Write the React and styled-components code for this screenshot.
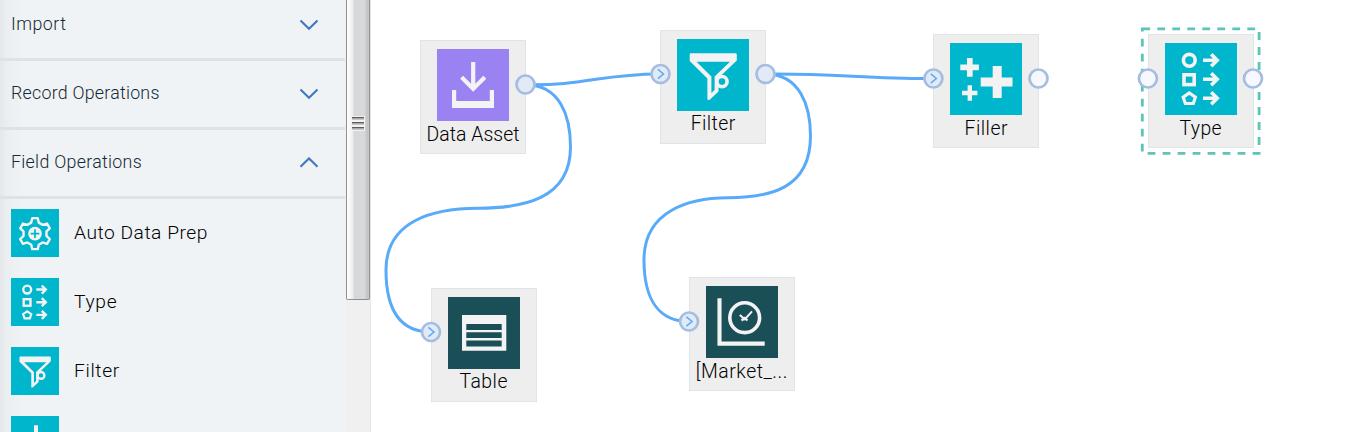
import React from "react";
import styled, { createGlobalStyle } from "styled-components";

const GlobalStyle = createGlobalStyle`
  * { box-sizing: border-box; }
  body {
    margin: 0;
    overflow: hidden;
    background: #fff;
    font-family: Roboto, "Liberation Sans", sans-serif;
    font-weight: 300;
  }
`;

const TEAL = "#00b6cd";
const PURPLE = "#9b82f3";
const DARK = "#1b4f57";
const LIGHT = "#f3f3f3";

const Page = styled.div`
  display: flex;
  width: 1370px;
  height: 432px;
  overflow: hidden;
`;

const Sidebar = styled.aside`
  flex: none;
  width: 346px;
  height: 432px;
  padding-right: 1px;
  overflow: hidden;
  background: linear-gradient(to right, #e4e8eb 0, #ebeff1 8px, #eff3f6 22px);
`;

const SectionHeader = styled.div`
  display: flex;
  align-items: center;
  justify-content: space-between;
  height: 69px;
  padding: 0 26px 1px 11px;
  border-bottom: 3px solid #dee2e5;
  color: #152935;
  font-size: 17.8px;
  letter-spacing: ${(p) => p.$spacing}px;
  &:first-child { margin-top: -8px; }
`;

const SectionTitle = styled.span`
  padding-bottom: 2px;
`;

const PaletteList = styled.div`
  display: flex;
  flex-direction: column;
  gap: 21px;
  padding: 10px 0 0 11px;
`;

const PaletteRow = styled.div`
  display: flex;
  align-items: center;
  gap: 15px;
  height: 48px;
  color: #000;
  font-size: 19.2px;
  letter-spacing: ${(p) => p.$spacing}px;
  white-space: nowrap;
`;

const PaletteLabel = styled.span`
  line-height: 24px;
`;

const ScrollTrack = styled.div`
  flex: none;
  width: 25px;
  height: 432px;
  background: #f0f0f0;
  border-right: 1px solid #e6e6e6;
`;

const ScrollThumb = styled.div`
  display: flex;
  flex-direction: column;
  align-items: center;
  gap: 2px;
  width: 24px;
  height: 300px;
  padding: 117px 1px 0 0;
  border: 1px solid #8f8f91;
  border-top: 0;
  border-radius: 0 0 2px 2px;
  background: linear-gradient(to right, #fff 0, #f0f0f1 5px, #ebebec 6px, #d6d7d9 7px, #d8d9db 17px, #bfc0c2 21px, #d0d0d2 22px);
`;

const Grip = styled.div`
  width: 12px;
  height: 3px;
  background: linear-gradient(to bottom, #5c5c5c 0 1px, #a8a8a8 1px 2px, #c6c6c6 2px 3px);
  box-shadow: 0 0 0 1px #f2f2f2;
`;

const Canvas = styled.main`
  position: relative;
  flex: 1;
  height: 432px;
  background: #fff;
`;

const Overlay = styled.svg`
  position: absolute;
  top: 0;
  left: -371px;
  pointer-events: none;
`;

const NodeCard = styled.div`
  position: absolute;
  left: ${(p) => p.$x - 371}px;
  top: ${(p) => p.$y}px;
  display: flex;
  flex-direction: column;
  align-items: center;
  width: 106px;
  height: 114px;
  padding-top: 8px;
  border: 1px solid #dfe4e8;
  background: #eee;
`;

const NodeLabel = styled.div`
  margin-top: ${(p) => p.$drop}px;
  height: 24px;
  line-height: 24px;
  color: #000;
  font-size: 19.4px;
  letter-spacing: ${(p) => p.$spacing}px;
  margin-right: ${(p) => -p.$spacing}px;
  white-space: nowrap;
`;

const IconSvg = styled.svg`
  display: block;
  flex: none;
`;

function Tile({ size, color, children }) {
  return (
    <IconSvg width={size} height={size} viewBox="0 0 72 72" fill="none" stroke={LIGHT}>
      <rect width="72" height="72" fill={color} stroke="none" />
      {children}
    </IconSvg>
  );
}

const DataAssetIcon = ({ size }) => (
  <Tile size={size} color={PURPLE}>
    <path d="M36.2 13V39.5M24.6 28.3L36.2 39.8L47.8 28.3" strokeWidth="4.2" />
    <path d="M15 41h4.2v11h33.6V41H57v18H15z" fill={LIGHT} stroke="none" />
  </Tile>
);

const FilterIcon = ({ size }) => (
  <Tile size={size} color={TEAL}>
    <path
      fillRule="evenodd"
      fill={LIGHT}
      stroke="none"
      d="M14 14.3H58.6Q59.8 14.3 59.8 15.5V21.5L41.5 39V52.5L33 60.5Q30.4 62 30.4 59.5V39.5L12.7 22V15.5Q12.7 14.3 14 14.3ZM19.6 22.8L34.4 37.6V54L37.6 51V37.6L53 22.8Z"
    />
    <circle cx="45" cy="42.6" r="5.1" fill={TEAL} strokeWidth="3.6" />
  </Tile>
);

const FillerIcon = ({ size }) => (
  <Tile size={size} color={TEAL}>
    <path d="M19.8 15V33.7M10.3 24.4H28.9" strokeWidth="5.7" />
    <path d="M19.8 42.3V57.7M12 50H27.4" strokeWidth="4.4" />
    <path d="M47.2 23V55M30.7 39H62.5" strokeWidth="9" />
  </Tile>
);

const TypeIcon = ({ size }) => (
  <Tile size={size} color={TEAL}>
    <g strokeWidth="3.6">
      <circle cx="24.3" cy="17.3" r="5.9" />
      <rect x="19" y="31.8" width="10.2" height="9.8" />
      <path d="M24.3 50L30.4 54.2L28.3 60.5H20.3L18.2 54.2Z" strokeWidth="3.2" />
      {[17.3, 36.3, 55.3].map((y) => (
        <path key={y} d={`M38 ${y}H52M46.2 ${y - 6}L52.2 ${y}L46.2 ${y + 6}`} />
      ))}
    </g>
  </Tile>
);

const TableIcon = ({ size }) => (
  <Tile size={size} color={DARK}>
    <path d="M14 18H58.3V53.7H14Z" fill={LIGHT} stroke="none" />
    <path d="M18.3 27H53.7V33H18.3ZM18.3 35.3H53.7V41H18.3ZM18.3 43.4H53.7V49.4H18.3Z" fill={DARK} stroke="none" />
  </Tile>
);

const AnalysisIcon = ({ size }) => (
  <Tile size={size} color={DARK}>
    <path d="M13.5 12.3V57.6H58.7" strokeWidth="4.1" />
    <circle cx="38.7" cy="31.7" r="14.9" strokeWidth="3.6" />
    <path d="M33.8 29L38.8 33.3L46 25.3" strokeWidth="2" />
    <path d="M35.5 34.5L38.8 32L41.5 34.5" strokeWidth="2.2" />
  </Tile>
);

const gearPoints = Array.from({ length: 6 }, (_, tooth) =>
  [[17.5, -19], [23.6, -10], [23.6, 10], [17.5, 19]].map(([radius, offset]) => {
    const angle = ((tooth * 60 - 90 + offset) * Math.PI) / 180;
    return `${(36 + radius * Math.cos(angle)).toFixed(2)},${(37 + radius * Math.sin(angle)).toFixed(2)}`;
  }).join(" ")
).join(" ");

const GearIcon = ({ size }) => (
  <Tile size={size} color={TEAL}>
    <polygon points={gearPoints} strokeWidth="3.6" strokeLinejoin="round" />
    <circle cx="36" cy="37" r="10.2" fill={LIGHT} stroke="none" />
    <path d="M36 30.5V43.5M29.5 37H42.5" stroke={TEAL} strokeWidth="2.6" />
  </Tile>
);

const DeriveIcon = ({ size }) => (
  <Tile size={size} color={TEAL}>
    <path d="M37.5 13.7V50M26 36H47" strokeWidth="6" />
  </Tile>
);

const SECTIONS = [
  { label: "Import", spacing: 0.5 },
  { label: "Record Operations", spacing: 0.25 },
  { label: "Field Operations", spacing: 0.3, open: true },
];

const PALETTE = [
  { label: "Auto Data Prep", Icon: GearIcon, spacing: 0.53 },
  { label: "Type", Icon: TypeIcon, spacing: 0.7 },
  { label: "Filter", Icon: FilterIcon, spacing: 0.65 },
  { label: "Derive", Icon: DeriveIcon, spacing: 0.6 },
];

const NODES = [
  { label: "Data Asset", x: 420, y: 40, drop: 2, Icon: DataAssetIcon, spacing: 0.05 },
  { label: "Filter", x: 660, y: 30, drop: 1, Icon: FilterIcon, spacing: 0.4 },
  { label: "Filler", x: 933, y: 34, drop: 2, Icon: FillerIcon, spacing: 0.5 },
  { label: "Type", x: 1147.6, y: 34, drop: 2, Icon: TypeIcon, spacing: 0.4 },
  { label: "Table", x: 430.5, y: 288, drop: 1, Icon: TableIcon, spacing: 0.45 },
  { label: "[Market_...", x: 688.6, y: 277, drop: 2, Icon: AnalysisIcon, spacing: 0.52 },
];

const LINKS = [
  "M525.5 84.7C585 86 600 74 660 74",
  "M525.5 84.7C560 84.7 570.5 116 570.5 147C570.5 200 522 208 478 208.3C434 208.5 386 220 386 270C386 312 402 332 431 332",
  "M765.5 74C830 73 870 79 933.5 78.5",
  "M765.5 74C800 74 810.5 106 810.5 136C810.5 189 770 197.5 728 197.8C690 198 644 210 644 260C644 301 660 321.5 689 321.5",
];

const PORTS = [
  { x: 525.5, y: 84.5, linked: true },
  { x: 660.5, y: 74, linked: true, input: true },
  { x: 765.5, y: 74, linked: true },
  { x: 933.4, y: 78.5, linked: true, input: true },
  { x: 1038.5, y: 78.5 },
  { x: 1147.9, y: 78.5 },
  { x: 1253, y: 78.5 },
  { x: 431, y: 332, linked: true, input: true },
  { x: 689, y: 321.5, linked: true, input: true },
];

function Chevron({ open }) {
  return (
    <IconSvg width="20" height="12" viewBox="0 0 20 12" fill="none" stroke="#4178be" strokeWidth="2.1">
      <path d={open ? "M1.5 9.8L10 1.4L18.5 9.8" : "M1.5 1.4L10 9.8L18.5 1.4"} />
    </IconSvg>
  );
}

export default function App() {
  return (
    <Page>
      <GlobalStyle />
      <Sidebar>
        {SECTIONS.map((s) => (
          <SectionHeader key={s.label} $spacing={s.spacing}>
            <SectionTitle>{s.label}</SectionTitle>
            <Chevron open={s.open} />
          </SectionHeader>
        ))}
        <PaletteList>
          {PALETTE.map(({ label, Icon, spacing }) => (
            <PaletteRow key={label} $spacing={spacing}>
              <Icon size={48} />
              <PaletteLabel>{label}</PaletteLabel>
            </PaletteRow>
          ))}
        </PaletteList>
      </Sidebar>
      <ScrollTrack>
        <ScrollThumb>
          <Grip />
          <Grip />
          <Grip />
        </ScrollThumb>
      </ScrollTrack>
      <Canvas>
        <Overlay width="1370" height="432">
          <rect x="1142.3" y="28.9" width="116.8" height="124.5" fill="none" stroke="#5fc4b8" strokeWidth="2.8" strokeDasharray="7.8 7.2" />
        </Overlay>
        {NODES.map(({ label, x, y, drop, Icon, spacing }) => (
          <NodeCard key={label} $x={x} $y={y}>
            <Icon size={72} />
            <NodeLabel $spacing={spacing} $drop={drop}>{label}</NodeLabel>
          </NodeCard>
        ))}
        <Overlay width="1370" height="432" fill="none">
          <g stroke="#5aaafa" strokeWidth="3">
            {LINKS.map((d) => (
              <path key={d} d={d} />
            ))}
          </g>
          {PORTS.map((p) => (
            <g key={`${p.x}-${p.y}`}>
              <circle cx={p.x} cy={p.y} r="9" fill={p.linked ? "#e2eaf6" : "#f6f8fd"} stroke="#a5bde1" strokeWidth="2.7" />
              {p.input && (
                <path d={`M${p.x - 2.6} ${p.y - 4.6}L${p.x + 3} ${p.y}L${p.x - 2.6} ${p.y + 4.6}`} stroke="#5aaafa" strokeWidth="1.5" />
              )}
            </g>
          ))}
        </Overlay>
      </Canvas>
    </Page>
  );
}
